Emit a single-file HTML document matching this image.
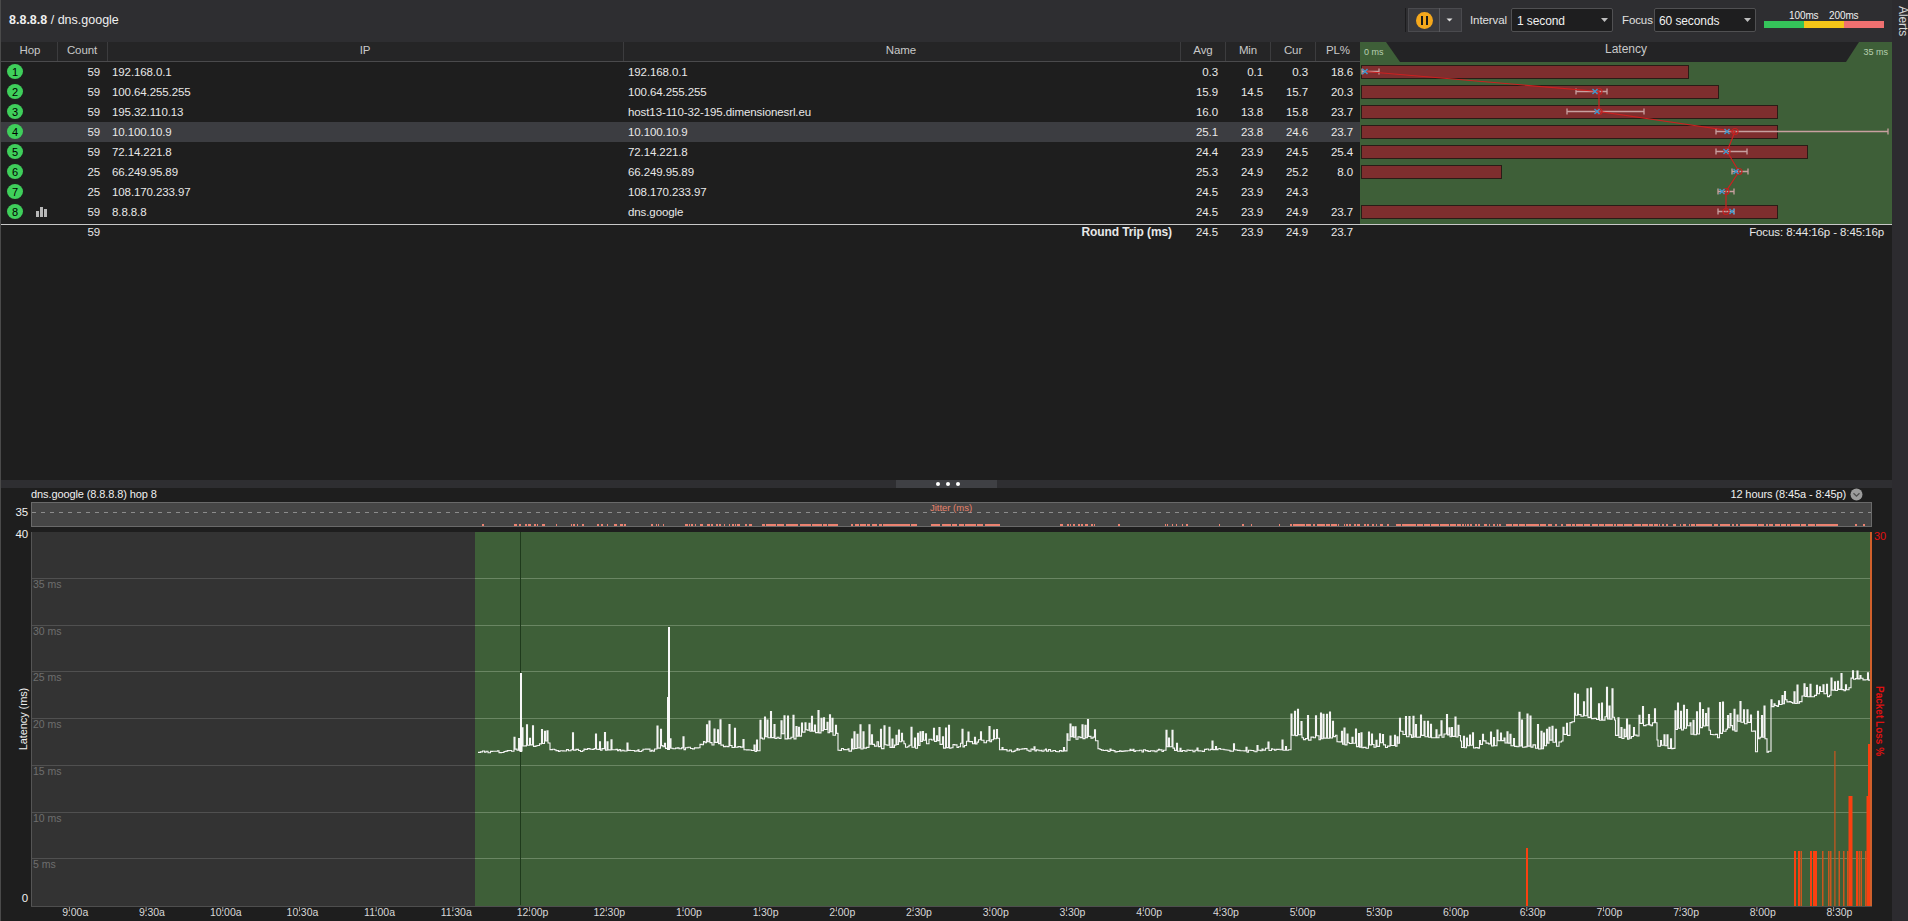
<!DOCTYPE html><html><head><meta charset="utf-8"><style>
*{margin:0;padding:0;box-sizing:border-box}
html,body{width:1908px;height:921px;overflow:hidden;background:#1e1e1e;font-family:"Liberation Sans", sans-serif;color:#e8e8e8}
.abs{position:absolute}
.t{position:absolute;white-space:nowrap;font-size:11.5px;line-height:14px;letter-spacing:-0.1px}
.r{text-align:right}
.c{text-align:center}
</style></head><body>

<div class="abs" style="left:0;top:0;width:1892px;height:42px;background:#2e2e31"></div>
<div class="abs" style="left:0;top:0;width:1px;height:921px;background:#4a4a4a"></div>
<div class="t" style="left:9px;top:13px;font-size:12.5px;color:#f0f0f0;letter-spacing:0"><b>8.8.8.8</b> / dns.google</div>
<div class="abs" style="left:1405px;top:8px;width:1px;height:24px;background:#1c1c1e"></div>
<div class="abs" style="left:1408px;top:8px;width:54px;height:24px;background:#3a3a3e;border:1px solid #4a4a4e"></div>
<div class="abs" style="left:1439px;top:8px;width:1px;height:24px;background:#5a5a5e"></div>
<div class="abs" style="left:1416px;top:12px;width:17px;height:17px;border-radius:50%;background:#f5a81c"></div>
<div class="abs" style="left:1421px;top:16px;width:2px;height:9px;background:#1a1a1a"></div>
<div class="abs" style="left:1426px;top:16px;width:2px;height:9px;background:#1a1a1a"></div>
<svg class="abs" style="left:1446px;top:18px" width="8" height="5"><path d="M0.5 0.5h6l-3 3z" fill="#e0e0e0"/></svg>
<div class="t" style="left:1470px;top:13px;font-size:11.5px;color:#e0e0e0">Interval</div>
<div class="abs" style="left:1511px;top:8px;width:102px;height:24px;background:#1e1e1f;border:1px solid #505052;border-radius:2px"></div>
<div class="t" style="left:1517px;top:14px;font-size:12px;color:#f0f0f0">1 second</div>
<svg class="abs" style="left:1601px;top:18px" width="8" height="5"><path d="M0 0h7l-3.5 4z" fill="#bdbdbd"/></svg>
<div class="t" style="left:1622px;top:13px;font-size:11.5px;color:#e0e0e0">Focus</div>
<div class="abs" style="left:1654px;top:8px;width:102px;height:24px;background:#1e1e1f;border:1px solid #505052;border-radius:2px"></div>
<div class="t" style="left:1659px;top:14px;font-size:12px;color:#f0f0f0">60 seconds</div>
<svg class="abs" style="left:1744px;top:18px" width="8" height="5"><path d="M0 0h7l-3.5 4z" fill="#bdbdbd"/></svg>
<div class="abs" style="left:1764px;top:21px;width:40px;height:7px;background:#35c45a"></div>
<div class="abs" style="left:1804px;top:21px;width:40px;height:7px;background:#f5c518"></div>
<div class="abs" style="left:1844px;top:21px;width:40px;height:7px;background:#f07070"></div>
<div class="t" style="left:1789px;top:10px;font-size:10px;line-height:11px;color:#f0f0f0">100ms</div>
<div class="t" style="left:1829px;top:10px;font-size:10px;line-height:11px;color:#f0f0f0">200ms</div>
<div class="abs" style="left:1892px;top:0;width:16px;height:921px;background:#2c2b2f"></div>
<div class="t" style="left:1883px;top:19px;width:40px;font-size:12px;color:#d8d8d8;transform:rotate(90deg);transform-origin:center">Alerts</div>
<div class="abs" style="left:1px;top:42px;width:1359px;height:20px;background:#252526"></div>
<div class="abs" style="left:1px;top:61px;width:1359px;height:1px;background:#4a4a4c"></div>
<div class="abs" style="left:57px;top:42px;width:1px;height:19px;background:#3c3c3e"></div>
<div class="abs" style="left:107px;top:42px;width:1px;height:19px;background:#3c3c3e"></div>
<div class="abs" style="left:623px;top:42px;width:1px;height:19px;background:#3c3c3e"></div>
<div class="abs" style="left:1180px;top:42px;width:1px;height:19px;background:#3c3c3e"></div>
<div class="abs" style="left:1225px;top:42px;width:1px;height:19px;background:#3c3c3e"></div>
<div class="abs" style="left:1270px;top:42px;width:1px;height:19px;background:#3c3c3e"></div>
<div class="abs" style="left:1315px;top:42px;width:1px;height:19px;background:#3c3c3e"></div>
<div class="t c" style="left:-20px;top:43px;width:100px;font-size:11.5px;color:#c8c8c8">Hop</div>
<div class="t c" style="left:32px;top:43px;width:100px;font-size:11.5px;color:#c8c8c8">Count</div>
<div class="t c" style="left:315px;top:43px;width:100px;font-size:11.5px;color:#c8c8c8">IP</div>
<div class="t c" style="left:851px;top:43px;width:100px;font-size:11.5px;color:#c8c8c8">Name</div>
<div class="t c" style="left:1153px;top:43px;width:100px;font-size:11.5px;color:#c8c8c8">Avg</div>
<div class="t c" style="left:1198px;top:43px;width:100px;font-size:11.5px;color:#c8c8c8">Min</div>
<div class="t c" style="left:1243px;top:43px;width:100px;font-size:11.5px;color:#c8c8c8">Cur</div>
<div class="t c" style="left:1288px;top:43px;width:100px;font-size:11.5px;color:#c8c8c8">PL%</div>
<div class="abs" style="left:7px;top:64px;width:16px;height:15px;border-radius:50%;background:#3fcf5b"></div>
<div class="t c" style="left:7px;top:64.5px;width:16px;font-size:11px;color:#000">1</div>
<div class="t r" style="left:60px;top:64.5px;width:40px">59</div>
<div class="t" style="left:112px;top:64.5px">192.168.0.1</div>
<div class="t" style="left:628px;top:64.5px">192.168.0.1</div>
<div class="t r" style="left:1178px;top:64.5px;width:40px">0.3</div>
<div class="t r" style="left:1223px;top:64.5px;width:40px">0.1</div>
<div class="t r" style="left:1268px;top:64.5px;width:40px">0.3</div>
<div class="t r" style="left:1313px;top:64.5px;width:40px">18.6</div>
<div class="abs" style="left:7px;top:84px;width:16px;height:15px;border-radius:50%;background:#3fcf5b"></div>
<div class="t c" style="left:7px;top:84.5px;width:16px;font-size:11px;color:#000">2</div>
<div class="t r" style="left:60px;top:84.5px;width:40px">59</div>
<div class="t" style="left:112px;top:84.5px">100.64.255.255</div>
<div class="t" style="left:628px;top:84.5px">100.64.255.255</div>
<div class="t r" style="left:1178px;top:84.5px;width:40px">15.9</div>
<div class="t r" style="left:1223px;top:84.5px;width:40px">14.5</div>
<div class="t r" style="left:1268px;top:84.5px;width:40px">15.7</div>
<div class="t r" style="left:1313px;top:84.5px;width:40px">20.3</div>
<div class="abs" style="left:7px;top:104px;width:16px;height:15px;border-radius:50%;background:#3fcf5b"></div>
<div class="t c" style="left:7px;top:104.5px;width:16px;font-size:11px;color:#000">3</div>
<div class="t r" style="left:60px;top:104.5px;width:40px">59</div>
<div class="t" style="left:112px;top:104.5px">195.32.110.13</div>
<div class="t" style="left:628px;top:104.5px">host13-110-32-195.dimensionesrl.eu</div>
<div class="t r" style="left:1178px;top:104.5px;width:40px">16.0</div>
<div class="t r" style="left:1223px;top:104.5px;width:40px">13.8</div>
<div class="t r" style="left:1268px;top:104.5px;width:40px">15.8</div>
<div class="t r" style="left:1313px;top:104.5px;width:40px">23.7</div>
<div class="abs" style="left:1px;top:122px;width:1359px;height:20px;background:#3c3d41"></div>
<div class="abs" style="left:7px;top:124px;width:16px;height:15px;border-radius:50%;background:#3fcf5b"></div>
<div class="t c" style="left:7px;top:124.5px;width:16px;font-size:11px;color:#000">4</div>
<div class="t r" style="left:60px;top:124.5px;width:40px">59</div>
<div class="t" style="left:112px;top:124.5px">10.100.10.9</div>
<div class="t" style="left:628px;top:124.5px">10.100.10.9</div>
<div class="t r" style="left:1178px;top:124.5px;width:40px">25.1</div>
<div class="t r" style="left:1223px;top:124.5px;width:40px">23.8</div>
<div class="t r" style="left:1268px;top:124.5px;width:40px">24.6</div>
<div class="t r" style="left:1313px;top:124.5px;width:40px">23.7</div>
<div class="abs" style="left:7px;top:144px;width:16px;height:15px;border-radius:50%;background:#3fcf5b"></div>
<div class="t c" style="left:7px;top:144.5px;width:16px;font-size:11px;color:#000">5</div>
<div class="t r" style="left:60px;top:144.5px;width:40px">59</div>
<div class="t" style="left:112px;top:144.5px">72.14.221.8</div>
<div class="t" style="left:628px;top:144.5px">72.14.221.8</div>
<div class="t r" style="left:1178px;top:144.5px;width:40px">24.4</div>
<div class="t r" style="left:1223px;top:144.5px;width:40px">23.9</div>
<div class="t r" style="left:1268px;top:144.5px;width:40px">24.5</div>
<div class="t r" style="left:1313px;top:144.5px;width:40px">25.4</div>
<div class="abs" style="left:7px;top:164px;width:16px;height:15px;border-radius:50%;background:#3fcf5b"></div>
<div class="t c" style="left:7px;top:164.5px;width:16px;font-size:11px;color:#000">6</div>
<div class="t r" style="left:60px;top:164.5px;width:40px">25</div>
<div class="t" style="left:112px;top:164.5px">66.249.95.89</div>
<div class="t" style="left:628px;top:164.5px">66.249.95.89</div>
<div class="t r" style="left:1178px;top:164.5px;width:40px">25.3</div>
<div class="t r" style="left:1223px;top:164.5px;width:40px">24.9</div>
<div class="t r" style="left:1268px;top:164.5px;width:40px">25.2</div>
<div class="t r" style="left:1313px;top:164.5px;width:40px">8.0</div>
<div class="abs" style="left:7px;top:184px;width:16px;height:15px;border-radius:50%;background:#3fcf5b"></div>
<div class="t c" style="left:7px;top:184.5px;width:16px;font-size:11px;color:#000">7</div>
<div class="t r" style="left:60px;top:184.5px;width:40px">25</div>
<div class="t" style="left:112px;top:184.5px">108.170.233.97</div>
<div class="t" style="left:628px;top:184.5px">108.170.233.97</div>
<div class="t r" style="left:1178px;top:184.5px;width:40px">24.5</div>
<div class="t r" style="left:1223px;top:184.5px;width:40px">23.9</div>
<div class="t r" style="left:1268px;top:184.5px;width:40px">24.3</div>
<div class="t r" style="left:1313px;top:184.5px;width:40px"></div>
<div class="abs" style="left:7px;top:204px;width:16px;height:15px;border-radius:50%;background:#3fcf5b"></div>
<div class="t c" style="left:7px;top:204.5px;width:16px;font-size:11px;color:#000">8</div>
<div class="t r" style="left:60px;top:204.5px;width:40px">59</div>
<div class="t" style="left:112px;top:204.5px">8.8.8.8</div>
<div class="t" style="left:628px;top:204.5px">dns.google</div>
<div class="t r" style="left:1178px;top:204.5px;width:40px">24.5</div>
<div class="t r" style="left:1223px;top:204.5px;width:40px">23.9</div>
<div class="t r" style="left:1268px;top:204.5px;width:40px">24.9</div>
<div class="t r" style="left:1313px;top:204.5px;width:40px">23.7</div>
<div class="abs" style="left:36px;top:211px;width:3px;height:6px;background:#b8b8b8"></div>
<div class="abs" style="left:40px;top:207px;width:3px;height:10px;background:#b8b8b8"></div>
<div class="abs" style="left:44px;top:209px;width:3px;height:8px;background:#b8b8b8"></div>
<div class="abs" style="left:1px;top:224px;width:1891px;height:1px;background:#c8c8c8"></div>
<div class="t r" style="left:60px;top:225px;width:40px">59</div>
<div class="t r" style="left:900px;top:225px;width:272px;font-weight:bold;font-size:12px">Round Trip (ms)</div>
<div class="t r" style="left:1178px;top:225px;width:40px">24.5</div>
<div class="t r" style="left:1223px;top:225px;width:40px">23.9</div>
<div class="t r" style="left:1268px;top:225px;width:40px">24.9</div>
<div class="t r" style="left:1313px;top:225px;width:40px">23.7</div>
<div class="t r" style="left:1600px;top:225px;width:284px">Focus: 8:44:16p - 8:45:16p</div>
<svg class="abs" style="left:1360px;top:41px" width="532" height="183"><rect x="0" y="1" width="532" height="182" fill="#3e5f38"/><path d="M26 1 L499 1 L486 21 L40 21 Z" fill="#232325"/><text x="4" y="14" font-size="9" fill="#b8d0b0" font-family="Liberation Sans">0 ms</text><text x="528" y="14" font-size="9" fill="#b8d0b0" text-anchor="end" font-family="Liberation Sans">35 ms</text><text x="266" y="12" font-size="12" fill="#c8c8c8" text-anchor="middle" font-family="Liberation Sans">Latency</text><rect x="1.5" y="24.5" width="327" height="13" fill="#7e2e2e" stroke="#2a1c16" stroke-width="1"/><rect x="1.5" y="44.5" width="357" height="13" fill="#7e2e2e" stroke="#2a1c16" stroke-width="1"/><rect x="1.5" y="64.5" width="416" height="13" fill="#7e2e2e" stroke="#2a1c16" stroke-width="1"/><rect x="1.5" y="84.5" width="416" height="13" fill="#7e2e2e" stroke="#2a1c16" stroke-width="1"/><rect x="1.5" y="104.5" width="446" height="13" fill="#7e2e2e" stroke="#2a1c16" stroke-width="1"/><rect x="1.5" y="124.5" width="140" height="13" fill="#7e2e2e" stroke="#2a1c16" stroke-width="1"/><rect x="1.5" y="164.5" width="416" height="13" fill="#7e2e2e" stroke="#2a1c16" stroke-width="1"/><path d="M2 30.5H19M2 27.5V33.5M19 27.5V33.5" stroke="#c8a0a0" stroke-width="1.3" fill="none"/><path d="M216 50.5H247M216 47.5V53.5M247 47.5V53.5" stroke="#c8a0a0" stroke-width="1.3" fill="none"/><path d="M207 70.5H284M207 67.5V73.5M284 67.5V73.5" stroke="#c8a0a0" stroke-width="1.3" fill="none"/><path d="M356 90.5H528M356 87.5V93.5M528 87.5V93.5" stroke="#c8a0a0" stroke-width="1.3" fill="none"/><path d="M356 110.5H387M356 107.5V113.5M387 107.5V113.5" stroke="#c8a0a0" stroke-width="1.3" fill="none"/><path d="M372 130.5H388M372 127.5V133.5M388 127.5V133.5" stroke="#c8a0a0" stroke-width="1.3" fill="none"/><path d="M358 150.5H374M358 147.5V153.5M374 147.5V153.5" stroke="#c8a0a0" stroke-width="1.3" fill="none"/><path d="M358 170.5H374M358 167.5V173.5M374 167.5V173.5" stroke="#c8a0a0" stroke-width="1.3" fill="none"/><polyline points="5,30.5 239,50.5 239,70.5 375,90.5 367,110.5 379,130.5 366,150.5 366,170.5" fill="none" stroke="#cc2020" stroke-width="1.2"/><circle cx="239" cy="50.5" r="3" fill="none" stroke="#c42020" stroke-width="1.2"/><circle cx="239" cy="70.5" r="3" fill="none" stroke="#c42020" stroke-width="1.2"/><circle cx="375" cy="90.5" r="3" fill="none" stroke="#c42020" stroke-width="1.2"/><circle cx="367" cy="110.5" r="3" fill="none" stroke="#c42020" stroke-width="1.2"/><circle cx="379" cy="130.5" r="3" fill="none" stroke="#c42020" stroke-width="1.2"/><circle cx="366" cy="150.5" r="3" fill="none" stroke="#c42020" stroke-width="1.2"/><circle cx="366" cy="170.5" r="3" fill="none" stroke="#c42020" stroke-width="1.2"/><path d="M2.5 28.0L7.5 33.0M2.5 33.0L7.5 28.0" stroke="#3f98cc" stroke-width="1.4"/><path d="M232.5 48.0L237.5 53.0M232.5 53.0L237.5 48.0" stroke="#3f98cc" stroke-width="1.4"/><path d="M234.5 68.0L239.5 73.0M234.5 73.0L239.5 68.0" stroke="#3f98cc" stroke-width="1.4"/><path d="M364.5 88.0L369.5 93.0M364.5 93.0L369.5 88.0" stroke="#3f98cc" stroke-width="1.4"/><path d="M363.5 108.0L368.5 113.0M363.5 113.0L368.5 108.0" stroke="#3f98cc" stroke-width="1.4"/><path d="M373.5 128.0L378.5 133.0M373.5 133.0L378.5 128.0" stroke="#3f98cc" stroke-width="1.4"/><path d="M359.5 148.0L364.5 153.0M359.5 153.0L364.5 148.0" stroke="#3f98cc" stroke-width="1.4"/><path d="M369.5 168.0L374.5 173.0M369.5 173.0L374.5 168.0" stroke="#3f98cc" stroke-width="1.4"/></svg>
<div class="abs" style="left:1px;top:480px;width:1891px;height:8px;background:#2e2e31"></div>
<div class="abs" style="left:896px;top:480px;width:101px;height:8px;background:#3f4044"></div>
<div class="abs" style="left:936px;top:482px;width:4px;height:4px;border-radius:50%;background:#fff"></div>
<div class="abs" style="left:946px;top:482px;width:4px;height:4px;border-radius:50%;background:#fff"></div>
<div class="abs" style="left:956px;top:482px;width:4px;height:4px;border-radius:50%;background:#fff"></div>
<div class="t" style="left:31px;top:487px;font-size:11px;color:#f0f0f0">dns.google (8.8.8.8) hop 8</div>
<div class="t r" style="left:1600px;top:487px;width:246px;font-size:11px;color:#f0f0f0">12 hours (8:45a - 8:45p)</div>
<svg class="abs" style="left:1850px;top:488px" width="13" height="13"><circle cx="6.5" cy="6.5" r="6" fill="#9c9c9c"/><path d="M3.5 5.2L6.5 8.2L9.5 5.2" stroke="#505050" stroke-width="1.3" fill="none"/></svg>
<div class="t r" style="left:0;top:505px;width:28px;font-size:11.5px;color:#f0f0f0">35</div>
<div class="t r" style="left:0;top:527px;width:28px;font-size:11.5px;color:#f0f0f0">40</div>
<div class="t r" style="left:0;top:891px;width:28px;font-size:11.5px;color:#f0f0f0">0</div>
<div class="t c" style="left:-17px;top:712px;width:80px;font-size:11px;color:#f0f0f0;transform:rotate(-90deg)">Latency (ms)</div>
<svg class="abs" style="left:0;top:0" width="1908" height="921"><rect x="31.5" y="502.5" width="1840" height="24" fill="#464646" stroke="#6a6a6a" stroke-width="1"/><line x1="32" y1="512.5" x2="1871" y2="512.5" stroke="#8c8c8c" stroke-width="1" stroke-dasharray="4 5"/><text x="951" y="511" font-size="9.5" fill="#e8826a" text-anchor="middle" font-family="Liberation Sans">Jitter (ms)</text><rect x="31" y="532" width="1841" height="374" fill="#333333"/><rect x="475" y="532" width="1397" height="374" fill="#3e5f38"/><line x1="31" y1="858.5" x2="475" y2="858.5" stroke="#505050" stroke-width="1"/><line x1="475" y1="858.5" x2="1872" y2="858.5" stroke="#6a8663" stroke-width="1"/><text x="33" y="868.0" font-size="10.5" fill="#6e6e6e" font-family="Liberation Sans">5 ms</text><line x1="31" y1="812.5" x2="475" y2="812.5" stroke="#505050" stroke-width="1"/><line x1="475" y1="812.5" x2="1872" y2="812.5" stroke="#6a8663" stroke-width="1"/><text x="33" y="822.0" font-size="10.5" fill="#6e6e6e" font-family="Liberation Sans">10 ms</text><line x1="31" y1="765.5" x2="475" y2="765.5" stroke="#505050" stroke-width="1"/><line x1="475" y1="765.5" x2="1872" y2="765.5" stroke="#6a8663" stroke-width="1"/><text x="33" y="775.0" font-size="10.5" fill="#6e6e6e" font-family="Liberation Sans">15 ms</text><line x1="31" y1="718.5" x2="475" y2="718.5" stroke="#505050" stroke-width="1"/><line x1="475" y1="718.5" x2="1872" y2="718.5" stroke="#6a8663" stroke-width="1"/><text x="33" y="728.0" font-size="10.5" fill="#6e6e6e" font-family="Liberation Sans">20 ms</text><line x1="31" y1="671.5" x2="475" y2="671.5" stroke="#505050" stroke-width="1"/><line x1="475" y1="671.5" x2="1872" y2="671.5" stroke="#6a8663" stroke-width="1"/><text x="33" y="681.0" font-size="10.5" fill="#6e6e6e" font-family="Liberation Sans">25 ms</text><line x1="31" y1="625.5" x2="475" y2="625.5" stroke="#505050" stroke-width="1"/><line x1="475" y1="625.5" x2="1872" y2="625.5" stroke="#6a8663" stroke-width="1"/><text x="33" y="635.0" font-size="10.5" fill="#6e6e6e" font-family="Liberation Sans">30 ms</text><line x1="31" y1="578.5" x2="475" y2="578.5" stroke="#505050" stroke-width="1"/><line x1="475" y1="578.5" x2="1872" y2="578.5" stroke="#6a8663" stroke-width="1"/><text x="33" y="588.0" font-size="10.5" fill="#6e6e6e" font-family="Liberation Sans">35 ms</text><line x1="31.5" y1="532" x2="31.5" y2="906" stroke="#555555" stroke-width="1"/><line x1="31" y1="906.5" x2="1872" y2="906.5" stroke="#4e4e4e" stroke-width="1"/><line x1="520.5" y1="532" x2="520.5" y2="905" stroke="#1f3a1c" stroke-width="1"/><path d="M478 752.4H478.0V752.4H480.5V751.9H482.5V751.0H484.5V752.3H486.0V751.2H488.0V752.7H490.5V751.4H492.5V751.3H495.0V751.2H497.5V750.9H499.0V752.6H501.5V752.5H504.0V751.5H506.0V751.1H507.5V750.6H509.0V750.5H511.5V751.2H514.0V737.3H515.0V749.1H517.0V750.3H518.5V738.5H519.5V751.0H522.0V727.9H523.0V746.0H525.0V745.9H526.5V724.7H527.5V745.3H529.5V738.4H530.5V744.9H532.5V725.9H533.5V746.4H536.0V745.7H537.5V745.5H539.5V743.9H541.5V729.5H542.5V743.5H544.5V731.2H545.5V741.0H547.0V730.8H548.0V743.0H550.0V749.6H552.5V749.2H554.5V749.8H556.0V750.6H558.5V751.5H560.0V750.7H562.5V750.9H564.0V751.0H566.5V749.6H568.5V750.8H571.0V749.8H572.5V732.9H573.5V750.1H576.0V749.4H578.5V750.5H580.5V751.5H582.5V750.7H584.0V749.1H585.0V749.4H587.5V748.6H590.0V749.3H592.5V749.5H594.0V748.6H595.5V734.1H596.5V749.3H598.0V749.4H599.5V741.8H600.5V750.3H602.0V748.6H604.5V732.6H605.5V750.2H607.0V741.7H608.0V749.9H609.5V749.9H611.0V739.9H612.0V749.7H613.5V749.7H616.0V749.4H617.5V750.6H619.0V749.5H620.5V751.0H622.0V750.3H624.0V751.0H625.5V751.0H627.0V743.1H628.0V750.4H630.5V750.5H632.5V750.5H634.5V751.2H636.0V750.9H638.0V749.7H639.0V751.5H641.5V750.7H643.0V749.2H645.5V749.1H648.0V749.1H650.0V751.1H651.5V750.3H653.0V751.3H654.5V749.0H657.0V726.1H658.0V748.1H660.5V729.3H661.5V745.6H663.0V746.7H664.5V743.3H665.5V748.4H667.5V748.0H670.0V738.8H671.0V748.3H673.0V748.7H675.5V748.1H677.5V747.9H679.0V748.7H681.5V747.9H683.0V736.9H684.0V749.6H685.5V747.8H688.0V747.3H690.5V748.5H692.5V748.9H694.5V747.9H696.5V747.9H698.5V747.8H700.0V744.4H702.0V744.8H703.5V741.5H705.0V742.7H706.5V724.7H707.5V741.8H709.0V721.0H710.0V742.6H712.0V745.0H714.0V729.1H715.0V742.4H717.5V729.8H718.5V743.6H720.0V719.7H721.0V745.1H723.5V746.6H725.5V746.2H727.0V746.6H729.0V724.5H730.0V745.5H732.0V747.5H734.5V728.2H735.5V747.3H738.0V746.6H740.5V747.1H743.0V739.5H744.0V749.7H746.5V749.9H749.0V750.0H751.5V750.5H754.0V745.1H755.0V751.5H756.5V740.1H757.5V750.8H760.0V720.4H761.0V738.1H762.5V739.0H764.5V717.0H765.5V736.7H767.0V720.1H768.0V737.7H770.5V711.6H771.5V737.6H774.0V724.5H775.0V738.5H777.0V737.2H779.0V738.5H781.0V720.9H782.0V733.7H784.0V715.8H785.0V738.9H787.5V716.0H788.5V738.8H791.0V737.2H793.0V715.4H794.0V738.9H796.0V726.6H797.0V736.1H798.5V727.2H799.5V736.1H801.5V723.1H802.5V732.1H805.0V722.8H806.0V729.7H807.5V730.2H809.0V723.2H810.0V731.2H811.5V716.3H812.5V731.1H814.5V725.0H815.5V732.6H818.0V710.5H819.0V732.9H821.0V718.2H822.0V730.7H823.5V717.9H824.5V729.5H827.0V722.3H828.0V732.8H829.5V714.7H830.5V731.7H832.0V718.4H833.0V735.3H835.5V725.2H836.5V733.4H838.0V750.3H840.0V750.4H841.5V748.5H843.5V749.6H846.0V749.7H848.0V748.7H849.0V751.1H851.5V739.1H852.5V748.9H854.0V731.7H855.0V748.5H857.0V734.4H858.0V747.9H860.0V724.8H861.0V749.0H863.0V731.8H864.0V748.1H866.5V747.4H869.0V724.8H870.0V744.1H871.5V734.9H872.5V744.4H874.5V746.1H877.0V741.8H878.5V746.6H880.5V729.3H881.5V748.6H884.0V725.7H885.0V744.7H887.0V745.3H889.0V727.3H890.0V747.4H892.0V739.0H893.0V747.4H894.5V745.1H896.0V735.2H897.0V744.5H898.5V730.1H899.5V741.8H901.5V733.2H902.5V741.0H904.0V743.7H905.5V747.2H907.5V746.7H909.0V745.2H911.0V727.2H912.0V747.3H914.5V738.1H915.5V748.3H917.5V733.4H918.5V745.5H920.0V731.7H921.0V741.5H922.5V731.6H923.5V740.3H925.5V733.8H926.5V743.7H929.0V739.3H931.5V740.0H933.5V728.3H934.5V741.4H936.5V735.9H937.5V740.6H939.0V727.6H940.0V744.4H942.5V736.8H943.5V748.1H945.5V728.0H946.5V747.6H948.5V725.4H949.5V748.3H951.0V747.7H953.0V744.5H954.5V744.9H957.0V747.5H958.5V746.7H960.5V743.3H962.0V729.3H963.0V746.9H964.5V745.5H966.5V741.2H968.0V732.0H969.0V741.6H970.5V741.6H972.5V743.7H974.5V737.3H975.5V743.9H977.0V742.1H978.5V739.8H980.5V731.9H981.5V740.2H984.0V742.8H986.5V740.7H989.0V726.6H990.0V741.7H991.5V739.7H993.5V730.0H994.5V738.7H996.5V729.5H997.5V738.2H999.5V749.7H1002.0V747.6H1003.0V749.6H1005.0V749.6H1007.0V751.0H1009.5V750.1H1011.5V751.8H1013.5V751.4H1015.0V750.2H1017.0V748.5H1018.0V750.0H1019.5V749.2H1022.0V748.9H1024.5V748.6H1027.0V750.3H1029.0V751.3H1031.0V749.0H1032.5V749.8H1034.0V746.7H1035.0V750.9H1036.5V749.8H1037.5V750.0H1039.0V750.7H1041.0V750.4H1042.0V751.2H1044.0V750.0H1045.5V749.1H1046.5V751.1H1048.5V749.6H1050.5V751.2H1053.0V750.5H1055.5V751.5H1057.0V751.7H1059.5V750.6H1061.5V751.1H1063.5V747.6H1064.5V750.9H1067.0V733.8H1068.0V740.3H1070.0V724.0H1071.0V736.7H1072.5V726.8H1073.5V737.3H1075.0V726.7H1076.0V739.3H1078.0V736.7H1080.0V737.6H1082.0V724.9H1083.0V738.6H1085.0V725.2H1086.0V737.7H1087.5V719.5H1088.5V736.4H1091.0V738.1H1093.0V737.1H1094.5V729.7H1095.5V740.8H1098.0V748.8H1100.0V749.5H1101.5V750.1H1103.5V750.5H1105.5V750.4H1108.0V751.5H1110.0V749.1H1111.0V750.4H1113.5V750.6H1115.0V751.9H1117.0V751.5H1119.5V750.9H1121.0V751.4H1123.0V751.1H1125.0V750.9H1127.5V750.8H1130.0V749.4H1131.0V750.4H1133.0V749.4H1134.0V751.4H1135.5V750.8H1138.0V750.7H1139.5V750.2H1142.0V752.0H1143.5V749.7H1145.5V750.6H1148.0V751.4H1150.5V750.8H1152.5V750.9H1155.0V751.7H1157.0V750.2H1158.5V749.3H1159.5V749.9H1162.0V751.5H1163.5V750.3H1166.0V730.4H1167.0V746.8H1168.5V738.0H1169.5V746.7H1172.0V730.3H1173.0V748.1H1174.5V750.4H1176.5V743.4H1177.5V751.2H1180.0V748.4H1181.0V751.4H1182.5V750.5H1185.0V751.3H1187.0V750.0H1189.0V750.5H1190.5V750.2H1193.0V751.8H1195.0V750.3H1197.0V748.0H1198.0V750.9H1200.5V751.0H1202.5V751.4H1204.5V749.4H1206.5V749.0H1208.5V750.0H1210.5V749.4H1212.0V741.1H1213.0V749.6H1215.5V746.6H1216.5V749.6H1218.0V748.8H1219.5V748.6H1220.5V749.2H1222.5V749.3H1224.0V749.7H1226.0V750.0H1228.0V750.2H1230.0V751.1H1231.5V751.3H1233.5V743.7H1234.5V749.8H1236.0V750.0H1237.5V750.4H1240.0V750.7H1242.0V750.8H1244.0V750.9H1246.0V747.2H1247.0V752.2H1248.5V750.3H1251.0V750.5H1253.5V751.0H1255.0V751.8H1257.0V745.6H1258.0V750.2H1260.5V750.8H1262.0V749.1H1263.0V750.1H1265.5V748.3H1268.0V742.1H1269.0V750.5H1271.5V748.9H1272.5V749.2H1274.5V750.1H1276.0V749.4H1278.5V749.2H1280.0V749.7H1282.0V740.1H1283.0V750.2H1285.5V746.6H1286.5V750.2H1288.5V749.7H1291.0V714.0H1292.0V735.2H1294.5V711.4H1295.5V735.6H1297.5V709.2H1298.5V734.8H1301.0V721.6H1302.0V737.8H1303.5V739.6H1305.5V738.6H1307.5V715.5H1308.5V740.1H1311.0V737.1H1313.5V737.8H1315.5V715.7H1316.5V735.7H1319.0V739.7H1320.5V713.0H1321.5V738.8H1323.0V714.3H1324.0V738.1H1326.5V714.4H1327.5V738.3H1329.5V712.1H1330.5V738.0H1332.5V721.4H1333.5V736.6H1335.5V735.3H1337.0V741.8H1339.0V741.9H1341.5V731.3H1342.5V744.3H1344.0V728.0H1345.0V744.9H1347.0V734.0H1348.0V742.7H1349.5V743.5H1352.0V737.2H1353.0V743.3H1355.5V729.0H1356.5V746.6H1358.5V733.5H1359.5V747.1H1361.0V732.8H1362.0V747.8H1363.5V747.4H1366.0V748.3H1368.5V732.0H1369.5V744.9H1371.5V734.1H1372.5V744.5H1374.0V747.3H1376.0V740.2H1377.0V746.4H1379.5V733.9H1380.5V742.8H1382.5V734.6H1383.5V744.9H1385.5V747.5H1387.5V746.1H1390.0V736.1H1391.0V745.5H1392.5V745.5H1394.5V735.2H1395.5V746.1H1397.0V736.9H1398.0V743.2H1399.5V718.2H1400.5V731.2H1403.0V734.5H1405.5V716.5H1406.5V736.8H1409.0V716.6H1410.0V734.8H1411.5V737.4H1413.0V716.4H1414.0V737.0H1415.5V724.5H1416.5V737.2H1419.0V737.1H1420.5V715.0H1421.5V735.4H1424.0V721.3H1425.0V736.8H1427.5V721.2H1428.5V737.2H1430.5V724.2H1431.5V737.7H1434.0V737.8H1436.0V729.8H1437.0V737.8H1439.0V735.1H1441.0V720.8H1442.0V737.2H1444.0V734.0H1446.5V714.5H1447.5V734.9H1449.0V727.8H1450.0V736.8H1451.5V727.5H1452.5V736.4H1455.0V717.0H1456.0V737.0H1458.0V725.4H1459.0V735.5H1460.5V741.0H1461.5V747.5H1463.5V736.3H1464.5V747.8H1466.5V738.0H1467.5V745.8H1469.5V735.0H1470.5V745.3H1472.5V732.8H1473.5V748.0H1475.5V747.6H1478.0V748.1H1479.5V740.5H1480.5V744.4H1482.5V734.2H1483.5V740.9H1486.0V743.1H1488.5V743.9H1490.5V732.0H1491.5V746.0H1493.5V737.6H1494.5V745.7H1497.0V730.1H1498.0V740.8H1500.5V733.0H1501.5V740.6H1504.0V738.1H1505.0V743.0H1507.0V731.8H1508.0V743.1H1510.0V734.4H1511.0V745.7H1513.5V738.6H1514.5V746.4H1517.0V746.7H1519.0V712.4H1520.0V746.0H1521.5V720.0H1522.5V747.2H1525.0V746.9H1527.0V714.0H1528.0V746.1H1530.0V716.0H1531.0V747.1H1533.0V744.9H1535.5V748.3H1537.5V724.5H1538.5V749.0H1541.0V731.3H1542.0V748.7H1543.5V733.0H1544.5V745.7H1546.5V729.2H1547.5V743.1H1549.0V727.4H1550.0V740.1H1552.0V726.2H1553.0V742.2H1555.5V729.3H1556.5V746.3H1559.0V742.0H1561.5V741.0H1563.0V727.3H1564.0V734.4H1566.5V723.4H1567.5V735.4H1570.0V722.6H1572.0V721.8H1574.5V693.4H1575.5V715.2H1577.5V694.2H1578.5V714.6H1581.0V716.2H1583.5V701.8H1584.5V715.7H1587.0V688.8H1588.0V717.4H1590.5V688.1H1591.5V718.6H1594.0V718.4H1596.5V719.5H1598.5V703.8H1599.5V720.3H1601.5V703.0H1602.5V720.1H1605.0V716.8H1606.5V687.2H1607.5V718.9H1609.0V706.1H1610.0V719.1H1612.0V688.9H1613.0V717.2H1614.5V720.0H1615.5V735.4H1618.0V717.9H1619.0V737.4H1621.0V727.6H1622.0V738.5H1624.0V729.3H1625.0V736.6H1626.5V719.0H1627.5V739.1H1629.0V725.0H1630.0V738.3H1631.5V736.5H1633.5V727.6H1634.5V735.1H1637.0V736.0H1639.0V715.3H1640.0V723.4H1642.5V706.5H1643.5V725.6H1646.0V724.8H1648.5V714.6H1649.5V724.9H1651.0V725.7H1652.5V722.8H1654.5V708.9H1655.5V722.8H1657.0V740.0H1658.0V746.3H1660.5V740.5H1661.5V745.3H1664.0V734.8H1665.0V745.8H1667.0V734.7H1668.0V748.4H1670.5V738.7H1671.5V748.6H1673.0V748.4H1675.0V710.9H1676.0V729.5H1677.5V703.1H1678.5V728.2H1680.5V711.2H1681.5V730.0H1683.5V705.4H1684.5V728.2H1686.5V709.5H1687.5V725.7H1690.0V722.9H1691.0V734.2H1693.0V720.3H1694.0V734.7H1696.5V711.9H1697.5V734.0H1699.5V702.9H1700.5V727.6H1702.5V709.6H1703.5V726.0H1705.5V713.5H1706.5V725.8H1708.0V708.1H1709.0V730.2H1710.5V734.5H1713.0V734.7H1715.5V734.4H1717.5V737.8H1719.5V702.6H1720.5V733.4H1722.5V702.0H1723.5V731.3H1726.0V729.3H1727.5V715.6H1728.5V727.7H1730.0V713.5H1731.0V725.6H1732.5V730.0H1734.0V709.2H1735.0V731.1H1737.0V715.1H1738.0V721.3H1740.0V701.5H1741.0V722.3H1743.5V709.7H1744.5V723.7H1747.0V709.9H1748.0V722.4H1750.5V715.1H1751.5V731.2H1753.5V731.1H1755.5V751.7H1757.5V711.2H1758.5V738.7H1760.0V737.2H1761.5V715.6H1762.5V737.2H1764.0V706.1H1765.0V738.7H1767.0V752.1H1768.5V751.2H1771.0V699.8H1772.0V706.6H1774.0V703.9H1775.0V705.5H1777.0V706.4H1778.5V700.9H1779.5V704.5H1782.0V695.6H1783.0V703.8H1784.5V691.5H1785.5V699.8H1787.0V701.9H1789.5V701.5H1791.0V702.5H1792.5V703.3H1794.0V691.8H1795.0V703.5H1797.0V685.0H1798.0V703.3H1799.5V701.6H1802.0V696.0H1804.0V683.8H1805.0V696.5H1806.5V687.5H1807.5V696.8H1810.0V684.4H1811.0V696.7H1812.5V696.8H1814.5V695.4H1816.5V685.3H1817.5V693.8H1819.5V686.8H1820.5V691.5H1823.0V684.7H1824.0V693.7H1826.5V684.2H1827.5V696.6H1829.5V695.2H1831.0V678.1H1832.0V690.1H1834.5V681.9H1835.5V690.5H1837.5V681.4H1838.5V689.4H1841.0V673.5H1842.0V689.6H1844.0V690.8H1845.5V684.7H1846.5V689.8H1849.0V687.8H1851.0V678.1H1852.5V670.7H1853.5V679.2H1855.5V678.6H1857.0V671.0H1858.0V678.9H1860.0V675.6H1861.0V678.3H1863.0V679.9H1865.5V679.8H1867.5V672.9H1868.5V680.1H1870" fill="none" stroke="#f4f4f4" stroke-width="1.1"/><path d="M521 752V673M669 750V627M668 750V697" stroke="#f8f8f8" stroke-width="2" fill="none"/><rect x="1526" y="848" width="2" height="58" fill="#fa4010"/><rect x="1794" y="851" width="2" height="55" fill="#fa4010"/><rect x="1798" y="851" width="2" height="55" fill="#fa4010"/><rect x="1800.5" y="851" width="1.5" height="55" fill="#cc561e"/><rect x="1810" y="851" width="2" height="55" fill="#fa4010"/><rect x="1813" y="851" width="4" height="55" fill="#fa4010"/><rect x="1822" y="851" width="1.5" height="55" fill="#cc561e"/><rect x="1828" y="851" width="1.5" height="55" fill="#cc561e"/><rect x="1830" y="851" width="1.5" height="55" fill="#cc561e"/><rect x="1834.3" y="751" width="1.2000000000000455" height="155" fill="#cc561e"/><rect x="1838.5" y="851" width="1.5" height="55" fill="#cc561e"/><rect x="1843" y="851" width="1.5" height="55" fill="#cc561e"/><rect x="1847" y="851" width="1.5" height="55" fill="#cc561e"/><rect x="1848.5" y="796" width="4.0" height="110" fill="#fa4010"/><rect x="1856" y="851" width="2" height="55" fill="#fa4010"/><rect x="1858.5" y="851" width="1.5" height="55" fill="#cc561e"/><rect x="1860.5" y="851" width="1.5" height="55" fill="#cc561e"/><rect x="1865" y="851" width="1.5" height="55" fill="#cc561e"/><rect x="1866.5" y="796" width="4.5" height="110" fill="#fa4010"/><rect x="1868" y="744" width="2" height="162" fill="#fa4010"/><rect x="482" y="524" width="2" height="2" fill="#ec8270"/><rect x="514" y="524" width="3" height="2" fill="#ec8270"/><rect x="519" y="524" width="2" height="2" fill="#ec8270"/><rect x="525" y="524" width="2" height="2" fill="#ec8270"/><rect x="528" y="524" width="3" height="2" fill="#ec8270"/><rect x="534" y="524" width="2" height="2" fill="#ec8270"/><rect x="537" y="524" width="1" height="2" fill="#ec8270"/><rect x="542" y="524" width="3" height="2" fill="#ec8270"/><rect x="556" y="524" width="1" height="2" fill="#ec8270"/><rect x="571" y="524" width="1" height="2" fill="#ec8270"/><rect x="573" y="524" width="2" height="2" fill="#ec8270"/><rect x="577" y="524" width="1" height="2" fill="#ec8270"/><rect x="582" y="524" width="2" height="2" fill="#ec8270"/><rect x="597" y="524" width="2" height="2" fill="#ec8270"/><rect x="601" y="524" width="2" height="2" fill="#ec8270"/><rect x="607" y="524" width="1" height="2" fill="#ec8270"/><rect x="614" y="524" width="3" height="2" fill="#ec8270"/><rect x="620" y="524" width="3" height="2" fill="#ec8270"/><rect x="624" y="524" width="2" height="2" fill="#ec8270"/><rect x="651" y="524" width="2" height="2" fill="#ec8270"/><rect x="656" y="524" width="1" height="2" fill="#ec8270"/><rect x="658" y="524" width="1" height="2" fill="#ec8270"/><rect x="663" y="524" width="1" height="2" fill="#ec8270"/><rect x="685" y="524" width="3" height="2" fill="#ec8270"/><rect x="689" y="524" width="1" height="2" fill="#ec8270"/><rect x="691" y="524" width="2" height="2" fill="#ec8270"/><rect x="695" y="524" width="1" height="2" fill="#ec8270"/><rect x="700" y="524" width="3" height="2" fill="#ec8270"/><rect x="707" y="524" width="3" height="2" fill="#ec8270"/><rect x="711" y="524" width="2" height="2" fill="#ec8270"/><rect x="716" y="524" width="2" height="2" fill="#ec8270"/><rect x="719" y="524" width="2" height="2" fill="#ec8270"/><rect x="724" y="524" width="1" height="2" fill="#ec8270"/><rect x="729" y="524" width="1" height="2" fill="#ec8270"/><rect x="732" y="524" width="2" height="2" fill="#ec8270"/><rect x="735" y="524" width="1" height="2" fill="#ec8270"/><rect x="737" y="524" width="3" height="2" fill="#ec8270"/><rect x="745" y="524" width="2" height="2" fill="#ec8270"/><rect x="749" y="524" width="3" height="2" fill="#ec8270"/><rect x="762" y="524" width="3" height="2" fill="#ec8270"/><rect x="766" y="524" width="5" height="2" fill="#ec8270"/><rect x="771" y="524" width="5" height="2" fill="#ec8270"/><rect x="777" y="524" width="3" height="2" fill="#ec8270"/><rect x="780" y="524" width="4" height="2" fill="#ec8270"/><rect x="786" y="524" width="4" height="2" fill="#ec8270"/><rect x="790" y="524" width="3" height="2" fill="#ec8270"/><rect x="793" y="524" width="5" height="2" fill="#ec8270"/><rect x="800" y="524" width="6" height="2" fill="#ec8270"/><rect x="806" y="524" width="2" height="2" fill="#ec8270"/><rect x="808" y="524" width="3" height="2" fill="#ec8270"/><rect x="812" y="524" width="4" height="2" fill="#ec8270"/><rect x="816" y="524" width="6" height="2" fill="#ec8270"/><rect x="823" y="524" width="4" height="2" fill="#ec8270"/><rect x="828" y="524" width="2" height="2" fill="#ec8270"/><rect x="830" y="524" width="2" height="2" fill="#ec8270"/><rect x="832" y="524" width="6" height="2" fill="#ec8270"/><rect x="851" y="524" width="2" height="2" fill="#ec8270"/><rect x="855" y="524" width="4" height="2" fill="#ec8270"/><rect x="860" y="524" width="6" height="2" fill="#ec8270"/><rect x="867" y="524" width="3" height="2" fill="#ec8270"/><rect x="872" y="524" width="5" height="2" fill="#ec8270"/><rect x="879" y="524" width="3" height="2" fill="#ec8270"/><rect x="883" y="524" width="3" height="2" fill="#ec8270"/><rect x="886" y="524" width="4" height="2" fill="#ec8270"/><rect x="890" y="524" width="6" height="2" fill="#ec8270"/><rect x="896" y="524" width="3" height="2" fill="#ec8270"/><rect x="899" y="524" width="6" height="2" fill="#ec8270"/><rect x="905" y="524" width="5" height="2" fill="#ec8270"/><rect x="911" y="524" width="6" height="2" fill="#ec8270"/><rect x="931" y="524" width="5" height="2" fill="#ec8270"/><rect x="936" y="524" width="2" height="2" fill="#ec8270"/><rect x="938" y="524" width="2" height="2" fill="#ec8270"/><rect x="942" y="524" width="4" height="2" fill="#ec8270"/><rect x="946" y="524" width="5" height="2" fill="#ec8270"/><rect x="952" y="524" width="5" height="2" fill="#ec8270"/><rect x="959" y="524" width="5" height="2" fill="#ec8270"/><rect x="965" y="524" width="6" height="2" fill="#ec8270"/><rect x="971" y="524" width="2" height="2" fill="#ec8270"/><rect x="973" y="524" width="3" height="2" fill="#ec8270"/><rect x="977" y="524" width="6" height="2" fill="#ec8270"/><rect x="985" y="524" width="6" height="2" fill="#ec8270"/><rect x="991" y="524" width="4" height="2" fill="#ec8270"/><rect x="995" y="524" width="3" height="2" fill="#ec8270"/><rect x="998" y="524" width="2" height="2" fill="#ec8270"/><rect x="1060" y="524" width="3" height="2" fill="#ec8270"/><rect x="1067" y="524" width="2" height="2" fill="#ec8270"/><rect x="1070" y="524" width="1" height="2" fill="#ec8270"/><rect x="1073" y="524" width="2" height="2" fill="#ec8270"/><rect x="1078" y="524" width="2" height="2" fill="#ec8270"/><rect x="1081" y="524" width="2" height="2" fill="#ec8270"/><rect x="1085" y="524" width="3" height="2" fill="#ec8270"/><rect x="1091" y="524" width="2" height="2" fill="#ec8270"/><rect x="1094" y="524" width="1" height="2" fill="#ec8270"/><rect x="1118" y="524" width="2" height="2" fill="#ec8270"/><rect x="1165" y="524" width="1" height="2" fill="#ec8270"/><rect x="1167" y="524" width="1" height="2" fill="#ec8270"/><rect x="1172" y="524" width="1" height="2" fill="#ec8270"/><rect x="1176" y="524" width="1" height="2" fill="#ec8270"/><rect x="1182" y="524" width="1" height="2" fill="#ec8270"/><rect x="1186" y="524" width="2" height="2" fill="#ec8270"/><rect x="1219" y="524" width="1" height="2" fill="#ec8270"/><rect x="1242" y="524" width="2" height="2" fill="#ec8270"/><rect x="1251" y="524" width="1" height="2" fill="#ec8270"/><rect x="1279" y="524" width="1" height="2" fill="#ec8270"/><rect x="1290" y="524" width="2" height="2" fill="#ec8270"/><rect x="1293" y="524" width="6" height="2" fill="#ec8270"/><rect x="1299" y="524" width="6" height="2" fill="#ec8270"/><rect x="1306" y="524" width="5" height="2" fill="#ec8270"/><rect x="1313" y="524" width="2" height="2" fill="#ec8270"/><rect x="1317" y="524" width="2" height="2" fill="#ec8270"/><rect x="1319" y="524" width="2" height="2" fill="#ec8270"/><rect x="1321" y="524" width="4" height="2" fill="#ec8270"/><rect x="1326" y="524" width="4" height="2" fill="#ec8270"/><rect x="1331" y="524" width="6" height="2" fill="#ec8270"/><rect x="1338" y="524" width="1" height="2" fill="#ec8270"/><rect x="1344" y="524" width="1" height="2" fill="#ec8270"/><rect x="1346" y="524" width="2" height="2" fill="#ec8270"/><rect x="1349" y="524" width="2" height="2" fill="#ec8270"/><rect x="1354" y="524" width="2" height="2" fill="#ec8270"/><rect x="1357" y="524" width="3" height="2" fill="#ec8270"/><rect x="1364" y="524" width="2" height="2" fill="#ec8270"/><rect x="1367" y="524" width="2" height="2" fill="#ec8270"/><rect x="1372" y="524" width="2" height="2" fill="#ec8270"/><rect x="1376" y="524" width="1" height="2" fill="#ec8270"/><rect x="1380" y="524" width="3" height="2" fill="#ec8270"/><rect x="1387" y="524" width="2" height="2" fill="#ec8270"/><rect x="1396" y="524" width="2" height="2" fill="#ec8270"/><rect x="1398" y="524" width="3" height="2" fill="#ec8270"/><rect x="1402" y="524" width="3" height="2" fill="#ec8270"/><rect x="1405" y="524" width="5" height="2" fill="#ec8270"/><rect x="1410" y="524" width="6" height="2" fill="#ec8270"/><rect x="1417" y="524" width="3" height="2" fill="#ec8270"/><rect x="1420" y="524" width="3" height="2" fill="#ec8270"/><rect x="1424" y="524" width="4" height="2" fill="#ec8270"/><rect x="1428" y="524" width="2" height="2" fill="#ec8270"/><rect x="1431" y="524" width="3" height="2" fill="#ec8270"/><rect x="1434" y="524" width="5" height="2" fill="#ec8270"/><rect x="1440" y="524" width="4" height="2" fill="#ec8270"/><rect x="1444" y="524" width="5" height="2" fill="#ec8270"/><rect x="1450" y="524" width="6" height="2" fill="#ec8270"/><rect x="1457" y="524" width="4" height="2" fill="#ec8270"/><rect x="1462" y="524" width="2" height="2" fill="#ec8270"/><rect x="1465" y="524" width="1" height="2" fill="#ec8270"/><rect x="1467" y="524" width="2" height="2" fill="#ec8270"/><rect x="1470" y="524" width="2" height="2" fill="#ec8270"/><rect x="1475" y="524" width="2" height="2" fill="#ec8270"/><rect x="1478" y="524" width="2" height="2" fill="#ec8270"/><rect x="1484" y="524" width="3" height="2" fill="#ec8270"/><rect x="1489" y="524" width="1" height="2" fill="#ec8270"/><rect x="1493" y="524" width="2" height="2" fill="#ec8270"/><rect x="1497" y="524" width="1" height="2" fill="#ec8270"/><rect x="1499" y="524" width="2" height="2" fill="#ec8270"/><rect x="1506" y="524" width="6" height="2" fill="#ec8270"/><rect x="1513" y="524" width="2" height="2" fill="#ec8270"/><rect x="1515" y="524" width="3" height="2" fill="#ec8270"/><rect x="1519" y="524" width="4" height="2" fill="#ec8270"/><rect x="1523" y="524" width="2" height="2" fill="#ec8270"/><rect x="1526" y="524" width="6" height="2" fill="#ec8270"/><rect x="1532" y="524" width="3" height="2" fill="#ec8270"/><rect x="1535" y="524" width="4" height="2" fill="#ec8270"/><rect x="1540" y="524" width="6" height="2" fill="#ec8270"/><rect x="1548" y="524" width="4" height="2" fill="#ec8270"/><rect x="1555" y="524" width="2" height="2" fill="#ec8270"/><rect x="1561" y="524" width="2" height="2" fill="#ec8270"/><rect x="1566" y="524" width="5" height="2" fill="#ec8270"/><rect x="1572" y="524" width="3" height="2" fill="#ec8270"/><rect x="1576" y="524" width="5" height="2" fill="#ec8270"/><rect x="1581" y="524" width="2" height="2" fill="#ec8270"/><rect x="1584" y="524" width="6" height="2" fill="#ec8270"/><rect x="1592" y="524" width="6" height="2" fill="#ec8270"/><rect x="1599" y="524" width="5" height="2" fill="#ec8270"/><rect x="1605" y="524" width="3" height="2" fill="#ec8270"/><rect x="1608" y="524" width="2" height="2" fill="#ec8270"/><rect x="1610" y="524" width="3" height="2" fill="#ec8270"/><rect x="1614" y="524" width="2" height="2" fill="#ec8270"/><rect x="1617" y="524" width="6" height="2" fill="#ec8270"/><rect x="1624" y="524" width="4" height="2" fill="#ec8270"/><rect x="1628" y="524" width="4" height="2" fill="#ec8270"/><rect x="1634" y="524" width="2" height="2" fill="#ec8270"/><rect x="1636" y="524" width="5" height="2" fill="#ec8270"/><rect x="1642" y="524" width="6" height="2" fill="#ec8270"/><rect x="1649" y="524" width="4" height="2" fill="#ec8270"/><rect x="1654" y="524" width="2" height="2" fill="#ec8270"/><rect x="1656" y="524" width="2" height="2" fill="#ec8270"/><rect x="1659" y="524" width="1" height="2" fill="#ec8270"/><rect x="1662" y="524" width="2" height="2" fill="#ec8270"/><rect x="1666" y="524" width="2" height="2" fill="#ec8270"/><rect x="1673" y="524" width="3" height="2" fill="#ec8270"/><rect x="1680" y="524" width="1" height="2" fill="#ec8270"/><rect x="1683" y="524" width="3" height="2" fill="#ec8270"/><rect x="1689" y="524" width="1" height="2" fill="#ec8270"/><rect x="1691" y="524" width="4" height="2" fill="#ec8270"/><rect x="1696" y="524" width="6" height="2" fill="#ec8270"/><rect x="1702" y="524" width="4" height="2" fill="#ec8270"/><rect x="1706" y="524" width="6" height="2" fill="#ec8270"/><rect x="1714" y="524" width="4" height="2" fill="#ec8270"/><rect x="1720" y="524" width="5" height="2" fill="#ec8270"/><rect x="1725" y="524" width="5" height="2" fill="#ec8270"/><rect x="1732" y="524" width="2" height="2" fill="#ec8270"/><rect x="1736" y="524" width="2" height="2" fill="#ec8270"/><rect x="1740" y="524" width="5" height="2" fill="#ec8270"/><rect x="1745" y="524" width="6" height="2" fill="#ec8270"/><rect x="1751" y="524" width="6" height="2" fill="#ec8270"/><rect x="1758" y="524" width="6" height="2" fill="#ec8270"/><rect x="1766" y="524" width="2" height="2" fill="#ec8270"/><rect x="1769" y="524" width="2" height="2" fill="#ec8270"/><rect x="1771" y="524" width="2" height="2" fill="#ec8270"/><rect x="1775" y="524" width="5" height="2" fill="#ec8270"/><rect x="1781" y="524" width="5" height="2" fill="#ec8270"/><rect x="1787" y="524" width="3" height="2" fill="#ec8270"/><rect x="1791" y="524" width="5" height="2" fill="#ec8270"/><rect x="1796" y="524" width="4" height="2" fill="#ec8270"/><rect x="1801" y="524" width="5" height="2" fill="#ec8270"/><rect x="1808" y="524" width="4" height="2" fill="#ec8270"/><rect x="1812" y="524" width="3" height="2" fill="#ec8270"/><rect x="1816" y="524" width="6" height="2" fill="#ec8270"/><rect x="1822" y="524" width="4" height="2" fill="#ec8270"/><rect x="1826" y="524" width="2" height="2" fill="#ec8270"/><rect x="1828" y="524" width="3" height="2" fill="#ec8270"/><rect x="1831" y="524" width="3" height="2" fill="#ec8270"/><rect x="1834" y="524" width="4" height="2" fill="#ec8270"/><rect x="1855" y="524" width="2" height="2" fill="#ec8270"/><rect x="1863" y="524" width="2" height="2" fill="#ec8270"/><rect x="1870" y="532" width="2" height="374" fill="#d0602c"/><text x="1874" y="540" font-size="11" fill="#e01010" font-family="Liberation Sans">30</text><text transform="translate(1876,686) rotate(90)" font-size="10" font-weight="bold" fill="#e01010" font-family="Liberation Sans">Packet Loss %</text><text x="68.2" y="916" font-size="10.5" fill="#d8d8d8" text-anchor="end" font-family="Liberation Sans">9</text><text x="67.8" y="916" font-size="10.5" fill="#d8d8d8" font-family="Liberation Sans">:00a</text><rect x="68.9" y="907" width="1" height="3" fill="#9a9a9a"/><text x="144.9" y="916" font-size="10.5" fill="#d8d8d8" text-anchor="end" font-family="Liberation Sans">9</text><text x="144.5" y="916" font-size="10.5" fill="#d8d8d8" font-family="Liberation Sans">:30a</text><rect x="145.6" y="907" width="1" height="3" fill="#9a9a9a"/><text x="221.6" y="916" font-size="10.5" fill="#d8d8d8" text-anchor="end" font-family="Liberation Sans">10</text><text x="221.2" y="916" font-size="10.5" fill="#d8d8d8" font-family="Liberation Sans">:00a</text><rect x="222.3" y="907" width="1" height="3" fill="#9a9a9a"/><text x="298.3" y="916" font-size="10.5" fill="#d8d8d8" text-anchor="end" font-family="Liberation Sans">10</text><text x="297.9" y="916" font-size="10.5" fill="#d8d8d8" font-family="Liberation Sans">:30a</text><rect x="299.0" y="907" width="1" height="3" fill="#9a9a9a"/><text x="375.0" y="916" font-size="10.5" fill="#d8d8d8" text-anchor="end" font-family="Liberation Sans">11</text><text x="374.6" y="916" font-size="10.5" fill="#d8d8d8" font-family="Liberation Sans">:00a</text><rect x="375.7" y="907" width="1" height="3" fill="#9a9a9a"/><text x="451.7" y="916" font-size="10.5" fill="#d8d8d8" text-anchor="end" font-family="Liberation Sans">11</text><text x="451.3" y="916" font-size="10.5" fill="#d8d8d8" font-family="Liberation Sans">:30a</text><rect x="452.4" y="907" width="1" height="3" fill="#9a9a9a"/><text x="528.4" y="916" font-size="10.5" fill="#d8d8d8" text-anchor="end" font-family="Liberation Sans">12</text><text x="528.0" y="916" font-size="10.5" fill="#d8d8d8" font-family="Liberation Sans">:00p</text><rect x="529.1" y="907" width="1" height="3" fill="#9a9a9a"/><text x="605.1" y="916" font-size="10.5" fill="#d8d8d8" text-anchor="end" font-family="Liberation Sans">12</text><text x="604.7" y="916" font-size="10.5" fill="#d8d8d8" font-family="Liberation Sans">:30p</text><rect x="605.8" y="907" width="1" height="3" fill="#9a9a9a"/><text x="681.8" y="916" font-size="10.5" fill="#d8d8d8" text-anchor="end" font-family="Liberation Sans">1</text><text x="681.4" y="916" font-size="10.5" fill="#d8d8d8" font-family="Liberation Sans">:00p</text><rect x="682.5" y="907" width="1" height="3" fill="#9a9a9a"/><text x="758.5" y="916" font-size="10.5" fill="#d8d8d8" text-anchor="end" font-family="Liberation Sans">1</text><text x="758.1" y="916" font-size="10.5" fill="#d8d8d8" font-family="Liberation Sans">:30p</text><rect x="759.2" y="907" width="1" height="3" fill="#9a9a9a"/><text x="835.2" y="916" font-size="10.5" fill="#d8d8d8" text-anchor="end" font-family="Liberation Sans">2</text><text x="834.8" y="916" font-size="10.5" fill="#d8d8d8" font-family="Liberation Sans">:00p</text><rect x="835.9" y="907" width="1" height="3" fill="#9a9a9a"/><text x="911.9" y="916" font-size="10.5" fill="#d8d8d8" text-anchor="end" font-family="Liberation Sans">2</text><text x="911.5" y="916" font-size="10.5" fill="#d8d8d8" font-family="Liberation Sans">:30p</text><rect x="912.6" y="907" width="1" height="3" fill="#9a9a9a"/><text x="988.7" y="916" font-size="10.5" fill="#d8d8d8" text-anchor="end" font-family="Liberation Sans">3</text><text x="988.3" y="916" font-size="10.5" fill="#d8d8d8" font-family="Liberation Sans">:00p</text><rect x="989.4" y="907" width="1" height="3" fill="#9a9a9a"/><text x="1065.4" y="916" font-size="10.5" fill="#d8d8d8" text-anchor="end" font-family="Liberation Sans">3</text><text x="1065.0" y="916" font-size="10.5" fill="#d8d8d8" font-family="Liberation Sans">:30p</text><rect x="1066.1" y="907" width="1" height="3" fill="#9a9a9a"/><text x="1142.1" y="916" font-size="10.5" fill="#d8d8d8" text-anchor="end" font-family="Liberation Sans">4</text><text x="1141.7" y="916" font-size="10.5" fill="#d8d8d8" font-family="Liberation Sans">:00p</text><rect x="1142.8" y="907" width="1" height="3" fill="#9a9a9a"/><text x="1218.8" y="916" font-size="10.5" fill="#d8d8d8" text-anchor="end" font-family="Liberation Sans">4</text><text x="1218.4" y="916" font-size="10.5" fill="#d8d8d8" font-family="Liberation Sans">:30p</text><rect x="1219.5" y="907" width="1" height="3" fill="#9a9a9a"/><text x="1295.5" y="916" font-size="10.5" fill="#d8d8d8" text-anchor="end" font-family="Liberation Sans">5</text><text x="1295.1" y="916" font-size="10.5" fill="#d8d8d8" font-family="Liberation Sans">:00p</text><rect x="1296.2" y="907" width="1" height="3" fill="#9a9a9a"/><text x="1372.2" y="916" font-size="10.5" fill="#d8d8d8" text-anchor="end" font-family="Liberation Sans">5</text><text x="1371.8" y="916" font-size="10.5" fill="#d8d8d8" font-family="Liberation Sans">:30p</text><rect x="1372.9" y="907" width="1" height="3" fill="#9a9a9a"/><text x="1448.9" y="916" font-size="10.5" fill="#d8d8d8" text-anchor="end" font-family="Liberation Sans">6</text><text x="1448.5" y="916" font-size="10.5" fill="#d8d8d8" font-family="Liberation Sans">:00p</text><rect x="1449.6" y="907" width="1" height="3" fill="#9a9a9a"/><text x="1525.6" y="916" font-size="10.5" fill="#d8d8d8" text-anchor="end" font-family="Liberation Sans">6</text><text x="1525.2" y="916" font-size="10.5" fill="#d8d8d8" font-family="Liberation Sans">:30p</text><rect x="1526.3" y="907" width="1" height="3" fill="#9a9a9a"/><text x="1602.3" y="916" font-size="10.5" fill="#d8d8d8" text-anchor="end" font-family="Liberation Sans">7</text><text x="1601.9" y="916" font-size="10.5" fill="#d8d8d8" font-family="Liberation Sans">:00p</text><rect x="1603.0" y="907" width="1" height="3" fill="#9a9a9a"/><text x="1679.0" y="916" font-size="10.5" fill="#d8d8d8" text-anchor="end" font-family="Liberation Sans">7</text><text x="1678.6" y="916" font-size="10.5" fill="#d8d8d8" font-family="Liberation Sans">:30p</text><rect x="1679.7" y="907" width="1" height="3" fill="#9a9a9a"/><text x="1755.7" y="916" font-size="10.5" fill="#d8d8d8" text-anchor="end" font-family="Liberation Sans">8</text><text x="1755.3" y="916" font-size="10.5" fill="#d8d8d8" font-family="Liberation Sans">:00p</text><rect x="1756.4" y="907" width="1" height="3" fill="#9a9a9a"/><text x="1832.4" y="916" font-size="10.5" fill="#d8d8d8" text-anchor="end" font-family="Liberation Sans">8</text><text x="1832.0" y="916" font-size="10.5" fill="#d8d8d8" font-family="Liberation Sans">:30p</text><rect x="1833.1" y="907" width="1" height="3" fill="#9a9a9a"/></svg>
</body></html>
